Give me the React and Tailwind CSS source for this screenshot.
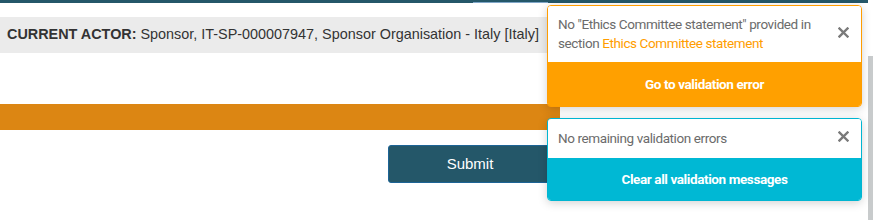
function CloseIcon() {
  return (
    <svg width="11" height="11" viewBox="0 0 11 11" className="shrink-0">
      <path d="M1.5 1.5 L9.5 9.5 M9.5 1.5 L1.5 9.5" stroke="#7a7a7a" strokeWidth="2.4" strokeLinecap="square" />
    </svg>
  )
}

function Toast({ tone, children, action }) {
  const orange = tone === 'orange'
  return (
    <div
      className={`w-[315px] rounded-[4px] border overflow-hidden shadow-[0_2px_10px_rgba(0,0,0,0.18)] ${
        orange ? 'border-[#ff9d00]' : 'border-[#00b5d1]'
      }`}
    >
      <div className="flex items-start justify-between bg-white pl-[10px] pr-[12px]">
        {children}
      </div>
      <button
        type="button"
        className={`block w-full text-center text-[13.5px] tracking-[-0.4px] font-bold text-white ${
          orange ? 'bg-[#ffa000] h-[44px]' : 'bg-[#00b8d4] h-[42px]'
        }`}
      >
        {action}
      </button>
    </div>
  )
}

export default function App() {
  return (
    <div className="relative w-[873px] h-[220px] bg-white overflow-hidden font-['Liberation_Sans',Arial,sans-serif]">
      <div className="flex h-[3px] w-[868px] bg-[#245769]">
        <div className="ml-[473px] mt-[2px] h-[1px] w-[75px] bg-[#7fa6c8]" />
      </div>

      <div className="mt-[14px] flex h-[36px] w-[548px] items-center bg-[#ebebeb] pl-[7px] text-[14.4px] text-[#333]">
        <span className="font-bold">CURRENT ACTOR:</span>
        <span className="ml-[4px]">Sponsor, IT-SP-000007947, Sponsor Organisation - Italy [Italy]</span>
      </div>

      <div className="mt-[51px] h-[26px] w-[560px] bg-[#dc8613]" />

      <button
        type="button"
        className="ml-[388px] mt-[15px] flex h-[38px] w-[164px] items-center justify-center rounded-[3px] border border-[#1d6496] bg-[#245769] text-[15px] text-white"
      >
        Submit
      </button>

      <div className="absolute right-0 top-[56px] bottom-0 w-[5px] bg-[#c8cbcc]" />

      <div className="absolute left-[547px] top-[5px] flex flex-col gap-[11px] font-['Roboto','Liberation_Sans',sans-serif]">
        <Toast tone="orange" action="Go to validation error">
          <p className="py-[9px] text-[13.5px] tracking-[-0.4px] leading-[19px] text-[#6b6b6b]">
            No "Ethics Committee statement" provided in
            <br />
            section <span className="text-[#ff9d00]">Ethics Committee statement</span>
          </p>
          <div className="pt-[21px]">
            <CloseIcon />
          </div>
        </Toast>
        <Toast tone="cyan" action="Clear all validation messages">
          <p className="py-[10px] text-[13.5px] tracking-[-0.4px] leading-[19px] text-[#6b6b6b]">No remaining validation errors</p>
          <div className="pt-[12px]">
            <CloseIcon />
          </div>
        </Toast>
      </div>
    </div>
  )
}
